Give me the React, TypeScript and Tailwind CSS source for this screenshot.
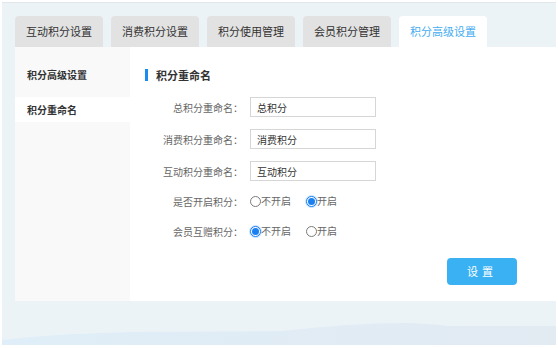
import { useState } from 'react'

const tabs = ['互动积分设置', '消费积分设置', '积分使用管理', '会员积分管理', '积分高级设置']

const fields = [
  { label: '总积分重命名：', value: '总积分' },
  { label: '消费积分重命名：', value: '消费积分' },
  { label: '互动积分重命名：', value: '互动积分' },
]

function Radio({ checked, label, onClick }: { checked: boolean; label: string; onClick: () => void }) {
  return (
    <button type="button" onClick={onClick} className="flex items-center text-[10px] text-[#666]">
      {checked ? (
        <span className="flex size-[11px] items-center justify-center rounded-full border border-[#1a7ff0] bg-white shadow-[0_0_0_1px_#c6e2ff]">
          <span className="size-[7px] rounded-full bg-[#1a7ff0]" />
        </span>
      ) : (
        <span className="size-[11px] rounded-full border border-[#7a7a7a] bg-white" />
      )}
      <span className="leading-none">{label}</span>
    </button>
  )
}

export default function App() {
  const [enabled, setEnabled] = useState(true)
  const [gift, setGift] = useState(false)

  return (
    <div
      className="h-[348px] w-[558px] bg-white pl-[2px] pt-[2px]"
      style={{ fontFamily: '"Noto Sans CJK SC", "Noto Sans", sans-serif' }}
    >
      <div className="flex h-[343px] w-[554px] flex-col border-t border-[#e2e6e9] bg-[#ecf3f7]">
        <div className="pl-[13px] pt-[13px]">
          {/* tabs */}
          <div className="flex h-[31px] gap-[8px]">
            {tabs.map((t, i) => (
              <div
                key={t}
                className={
                  i === 4
                    ? 'flex w-[88px] items-center justify-center rounded-t-[4px] bg-white text-[11px] text-[#46adf0]'
                    : 'flex w-[88px] items-center justify-center rounded-t-[4px] bg-[#e2e2e2] text-[11px] text-[#333]'
                }
              >
                {t}
              </div>
            ))}
          </div>

          {/* panel */}
          <div className="flex h-[254px] bg-white">
            <div className="w-[115px] bg-[#f9f9f9]">
              <div className="h-[50px] pl-[12px] pt-[21px] text-[10px] leading-[14px] font-bold text-[#333]">
                积分高级设置
              </div>
              <div className="flex h-[25px] items-center bg-white pl-[12px] text-[10px] font-bold text-[#333]">
                积分重命名
              </div>
            </div>

            <div className="flex-1 pl-[15px] pt-[20px]">
              <div className="flex h-[16px] items-center">
                <span className="h-[12px] w-[3px] bg-[#1a8cf0]" />
                <span className="ml-[8px] text-[11px] font-bold text-[#333]">积分重命名</span>
              </div>

              <div className="mt-[14px] flex flex-col gap-[12px]">
                {fields.map((f) => (
                  <div key={f.label} className="flex h-[20px] items-center">
                    <span className="w-[98px] text-right text-[10px] text-[#666]">{f.label}</span>
                    <input
                      defaultValue={f.value}
                      className="ml-[7px] h-[20px] w-[126px] border border-[#d6d6d6] px-[6px] text-[10px] text-[#333] outline-none"
                    />
                  </div>
                ))}
              </div>

              <div className="mt-[10px] flex h-[20px] items-center">
                <span className="w-[98px] text-right text-[10px] text-[#666]">是否开启积分：</span>
                <div className="ml-[7px] flex gap-[15px]">
                  <Radio checked={!enabled} label="不开启" onClick={() => setEnabled(false)} />
                  <Radio checked={enabled} label="开启" onClick={() => setEnabled(true)} />
                </div>
              </div>

              <div className="mt-[10px] flex h-[20px] items-center">
                <span className="w-[98px] text-right text-[10px] text-[#666]">会员互赠积分：</span>
                <div className="ml-[7px] flex gap-[15px]">
                  <Radio checked={!gift} label="不开启" onClick={() => setGift(false)} />
                  <Radio checked={gift} label="开启" onClick={() => setGift(true)} />
                </div>
              </div>

              <div className="mt-[17px] flex justify-end pr-[39px]">
                <button className="h-[27px] w-[70px] rounded-[4px] bg-[#3ab1f3] text-[11px] tracking-[4px] text-white">
                  设置
                </button>
              </div>
            </div>
          </div>
        </div>

        <div className="flex-1" />
        <svg width="554" height="25" viewBox="0 0 554 25" className="block">
          <defs>
            <linearGradient id="wave" x1="0" x2="1" y1="0" y2="0">
              <stop offset="0" stopColor="#dfeef8" />
              <stop offset="1" stopColor="#e2eaf2" />
            </linearGradient>
          </defs>
          <path
            d="M0 20 Q 60 13 130 12 L 280 11 Q 360 2 410 3 Q 440 5 445 6 L 554 6 L 554 25 L 0 25 Z"
            fill="url(#wave)"
          />
        </svg>
      </div>
    </div>
  )
}
